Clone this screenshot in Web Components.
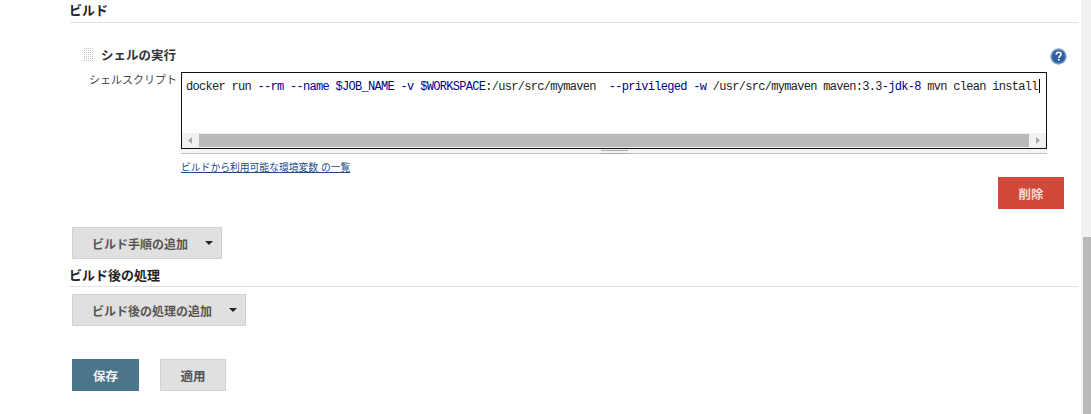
<!DOCTYPE html>
<html lang="ja">
<head>
<meta charset="utf-8">
<title>ビルド</title>
<style>
  html, body { margin: 0; height: 414px; overflow: hidden; background: #fff; }
  body { font: 13px "Liberation Sans", "Noto Sans CJK JP", sans-serif; color: #333; }
  build-step b { font-weight: normal; color: #00008b; }
</style>
</head>
<body>
<config-page>
  <section-head style="--top: 3px; --gap: 4px">ビルド</section-head>

  <build-step title-text="シェルの実行" label="シェルスクリプト" link="ビルドから利用可能な環境変数 の一覧" remove="削除"><span class="t">docker run <b>--rm</b> <b>--name</b> <b>$JOB_NAME</b> <b>-v</b> <b>$WORKSPACE</b>:/usr/src/mymaven  <b>--privileged</b> <b>-w</b> /usr/src/mymaven maven:3.3<b>-jdk-8</b> mvn clean install</span></build-step>

  <drop-button style="--top: 18px; --w: 150px">ビルド手順の追加</drop-button>
  <section-head style="--top: 9px; --gap: 3px">ビルド後の処理</section-head>
  <drop-button style="--top: 7px; --w: 174px">ビルド後の処理の追加</drop-button>

  <form-actions></form-actions>
</config-page>

<script>
class ConfigPage extends HTMLElement {
  constructor() {
    super();
    this.attachShadow({ mode: 'open' });
    this.shadowRoot.innerHTML = `
      <style>
        :host { display: flex; height: 414px; }
        main { flex: 1; min-width: 0; padding: 0 3px 0 69px; display: flex; flex-direction: column; align-items: flex-start; }
        .track { width: 10px; background: #f1f1f1; display: flex; flex-direction: column; }
        .track i { flex: 0 0 237px; }
        .track u { flex: 1; background: #b9b9b9; margin-left: 2px; }
      </style>
      <main><slot></slot></main>
      <div class="track"><i></i><u></u></div>
    `;
  }
}

class SectionHead extends HTMLElement {
  constructor() {
    super();
    this.attachShadow({ mode: 'open' });
    this.shadowRoot.innerHTML = `
      <style>
        :host { display: block; align-self: stretch; margin-top: var(--top, 0); font-weight: bold; font-size: 13px; line-height: 15px; color: #222; }
        div { padding-bottom: var(--gap, 4px); border-bottom: 1px solid #e2e2e2; margin-left: 1px; }
        span { margin-left: -1px; display: block; }
      </style>
      <div><span><slot></slot></span></div>
    `;
  }
}

class DropButton extends HTMLElement {
  constructor() {
    super();
    this.attachShadow({ mode: 'open' });
    this.shadowRoot.innerHTML = `
      <style>
        :host { display: block; margin-top: var(--top, 0); margin-left: 3px; }
        button { width: var(--w, 150px); height: 32px; box-sizing: border-box; padding: 0 0 0 19px; display: flex; align-items: center; justify-content: space-between; background: #e0e0e0; border: 1px solid #d2d2d2; font: bold 12px "Liberation Sans", "Noto Sans CJK JP", sans-serif; color: #555; }
        i { width: 0; height: 0; margin-right: 8px; border: 4px solid transparent; border-top: 4px solid #222; border-bottom: 0; }
      </style>
      <button><slot></slot><i></i></button>
    `;
  }
}

class BuildStep extends HTMLElement {
  constructor() {
    super();
    this.attachShadow({ mode: 'open' });
    this.shadowRoot.innerHTML = `
      <style>
        :host { display: block; align-self: stretch; margin-top: 23px; position: relative; }
        .title { display: flex; align-items: center; height: 16px; margin-left: 14px; font-weight: bold; font-size: 12.5px; color: #333; }
        .grip { width: 11px; height: 14px; margin-right: 7px; background-image: linear-gradient(#fff 1px, transparent 1px), linear-gradient(90deg, #fff 1px, #c4c4c4 1px); background-size: 2px 2px; }
        .help { position: absolute; right: 11px; top: 2px; width: 17px; height: 17px; }
        .row { display: grid; grid-template-columns: 112px 866px; margin-top: 10px; }
        .label { font-size: 11px; color: #444; padding: 0 0 0 20px; line-height: 17px; white-space: nowrap; }
        .box { height: 77px; border: 1px solid #111; box-sizing: border-box; width: 866px; display: flex; flex-direction: column; background: #fff; }
        pre { flex: 1; margin: 0; padding: 6px 0 0 4px; font: 12px/16px "Liberation Mono", monospace; letter-spacing: -.7px; color: #222; white-space: pre; overflow: hidden; }
        ::slotted(span) { display: contents; }
        .caret { display: inline-block; width: 1px; height: 14px; background: #000; vertical-align: -3px; margin-left: 1px; }
        .hbar { height: 15px; background: #f1f1f1; display: flex; align-items: center; }
        .hbar b { flex: 1; height: 13px; background: #b9b9b9; }
        .hbar svg { width: 17px; height: 15px; flex: none; }
        .grab { height: 5px; width: 866px; box-sizing: border-box; background: #f4f4f4; border-bottom: 1px solid #c4c4c4; display: flex; justify-content: center; }
        .grab i { width: 27px; height: 2px; margin-top: 1px; border-bottom: 1px solid #aaa; border-top: 1px solid #aaa; }
        a { display: block; margin: 7px 0 0 112px; font-size: 9.8px; line-height: 13px; color: #204a87; text-decoration: underline; }
        .del { display: flex; justify-content: flex-end; margin: 3px 14px 0 0; }
        .del button { width: 66px; height: 32px; background: #d24939; border: 1px solid #d24939; color: #f6dcd8; font: bold 12.5px "Liberation Sans", "Noto Sans CJK JP", sans-serif; padding: 0; }
      </style>
      <div class="title"><span class="grip"></span><span id="title"></span></div>
      <svg class="help" viewBox="0 0 17 17"><circle cx="8.5" cy="8.5" r="7.7" fill="#3b6ea8" stroke="#8fb0d4" stroke-width="1.2"/><circle cx="8.5" cy="8.5" r="5.8" fill="#2e5f9c"/><path d="M6.2 6.6c.1-1.5 1.1-2.3 2.4-2.3 1.4 0 2.4.9 2.4 2 0 1.8-2.2 1.8-2.2 3.6" fill="none" stroke="#fff" stroke-width="1.6"/><rect x="7.9" y="11" width="1.7" height="1.7" fill="#fff"/></svg>
      <div class="row">
        <div class="label" id="label"></div>
        <div>
          <div class="box">
            <pre><slot></slot><span class="caret"></span></pre>
            <div class="hbar">
              <svg viewBox="0 0 17 15"><path d="M10 4v7L6 7.5z" fill="#a9a9a9"/></svg>
              <b></b>
              <svg viewBox="0 0 17 15"><path d="M7 4v7l4-3.5z" fill="#a9a9a9"/></svg>
            </div>
          </div>
          <div class="grab"><i></i></div>
        </div>
      </div>
      <a href="#" id="link"></a>
      <div class="del"><button id="remove"></button></div>
    `;
  }
  connectedCallback() {
    const root = this.shadowRoot;
    root.getElementById('title').textContent = this.getAttribute('title-text');
    root.getElementById('label').textContent = this.getAttribute('label');
    root.getElementById('link').textContent = this.getAttribute('link');
    root.getElementById('remove').textContent = this.getAttribute('remove');
  }
}

class FormActions extends HTMLElement {
  constructor() {
    super();
    this.attachShadow({ mode: 'open' });
    this.shadowRoot.innerHTML = `
      <style>
        :host { display: flex; gap: 21px; margin: 33px 0 0 3px; }
        button { height: 32px; box-sizing: border-box; font: bold 12.5px "Liberation Sans", "Noto Sans CJK JP", sans-serif; padding: 0; }
        .save { width: 67px; background: #4b758b; border: 1px solid #4b758b; color: #eef3f6; }
        .apply { width: 66px; background: #e0e0e0; border: 1px solid #d2d2d2; color: #555; }
      </style>
      <button class="save">保存</button>
      <button class="apply">適用</button>
    `;
  }
}

customElements.define('config-page', ConfigPage);
customElements.define('section-head', SectionHead);
customElements.define('drop-button', DropButton);
customElements.define('build-step', BuildStep);
customElements.define('form-actions', FormActions);
</script>
</body>
</html>
